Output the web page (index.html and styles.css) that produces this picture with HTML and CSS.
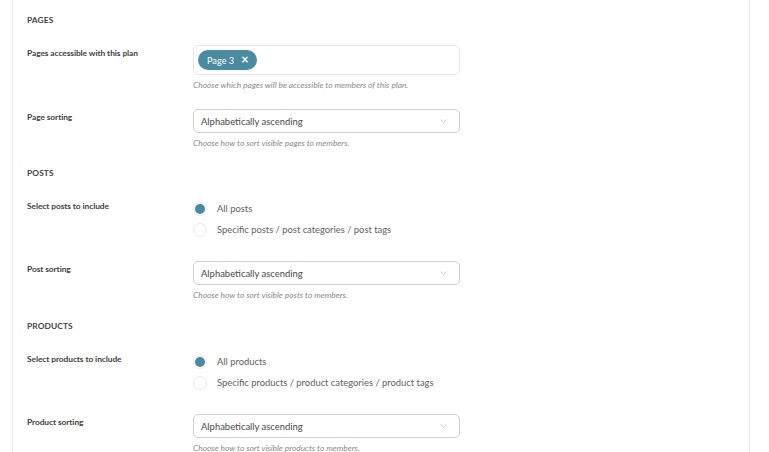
FILE: index.html
```html
<!DOCTYPE html>
<html lang="en">
<head>
<meta charset="utf-8">
<title>Plan content settings</title>
<link rel="stylesheet" href="styles.css">
</head>
<body>
<div class="card">
  <section class="section section-pages">
    <h3 class="section-title">PAGES</h3>
    <div class="row">
      <div class="label">Pages accessible with this plan</div>
      <div class="field">
        <div class="multi">
          <span class="chip">Page 3 <span class="chip-x">×</span></span>
        </div>
        <p class="help">Choose which pages will be accessible to members of this plan.</p>
      </div>
    </div>
    <div class="row">
      <div class="label">Page sorting</div>
      <div class="field">
        <div class="select">Alphabetically ascending
          <svg class="chev" width="9" height="6" viewBox="0 0 9 6"><path d="M1.5 1.5 L4.5 4.3 L7.5 1.5" fill="none" stroke="#cdcdcd" stroke-width="1"/></svg>
        </div>
        <p class="help">Choose how to sort visible pages to members.</p>
      </div>
    </div>
  </section>

  <section class="section section-posts">
    <h3 class="section-title">POSTS</h3>
    <div class="row row-radio">
      <div class="label">Select posts to include</div>
      <div class="field">
        <div class="radio"><span class="dot checked"></span>All posts</div>
        <div class="radio"><span class="dot"></span>Specific posts / post categories / post tags</div>
      </div>
    </div>
    <div class="row">
      <div class="label">Post sorting</div>
      <div class="field">
        <div class="select">Alphabetically ascending
          <svg class="chev" width="9" height="6" viewBox="0 0 9 6"><path d="M1.5 1.5 L4.5 4.3 L7.5 1.5" fill="none" stroke="#cdcdcd" stroke-width="1"/></svg>
        </div>
        <p class="help">Choose how to sort visible posts to members.</p>
      </div>
    </div>
  </section>

  <section class="section">
    <h3 class="section-title">PRODUCTS</h3>
    <div class="row row-radio">
      <div class="label">Select products to include</div>
      <div class="field">
        <div class="radio"><span class="dot checked"></span>All products</div>
        <div class="radio"><span class="dot"></span>Specific products / product categories / product tags</div>
      </div>
    </div>
    <div class="row">
      <div class="label">Product sorting</div>
      <div class="field">
        <div class="select">Alphabetically ascending
          <svg class="chev" width="9" height="6" viewBox="0 0 9 6"><path d="M1.5 1.5 L4.5 4.3 L7.5 1.5" fill="none" stroke="#cdcdcd" stroke-width="1"/></svg>
        </div>
        <p class="help">Choose how to sort visible products to members.</p>
      </div>
    </div>
  </section>
</div>
</body>
</html>
```

FILE: styles.css
```css
html, body {
  margin: 0;
  padding: 0;
  background: #ffffff;
}
body {
  font-family: Lato, "Liberation Sans", sans-serif;
  color: #3c3c3c;
  height: 452px;
  overflow: hidden;
}
.card {
  margin-left: 12px;
  width: 722px;
  border-left: 1px solid #ededed;
  border-right: 1px solid #ededed;
  padding: 13px 0 0 14px;
  height: 439px;
  overflow: hidden;
}
.section-title {
  margin: 0 0 18px;
  font-size: 8.4px;
  line-height: 14px;
  font-weight: 700;
  color: #3d434a;
  letter-spacing: 0.1px;
}
.row {
  display: grid;
  grid-template-columns: 166px 267px;
  margin-bottom: 18px;
}
.section-pages .row {
  margin-bottom: 17px;
}
.section .row:last-child {
  margin-bottom: 16px;
}
.section-posts .row:last-child {
  margin-bottom: 17px;
}
.section .row.row-radio {
  margin-bottom: 21px;
}
.label {
  font-size: 8.4px;
  font-weight: 700;
  line-height: 14px;
  padding-top: 1px;
  color: #3e3e3e;
  letter-spacing: -0.08px;
}
.field {
  display: flex;
  flex-direction: column;
}
.multi {
  height: 30px;
  box-sizing: border-box;
  border: 1px solid #e6e6e6;
  border-radius: 5px;
  padding: 4px;
  display: flex;
  align-items: flex-start;
}
.chip {
  display: inline-flex;
  align-items: center;
  height: 20px;
  padding: 0 9px 0 9px;
  border-radius: 10px;
  background: #4b8ba1;
  color: #ffffff;
  font-size: 9.2px;
}
.chip-x {
  margin-left: 7px;
  font-weight: 700;
  font-size: 12.5px;
  line-height: 1;
}
.help {
  margin: 3px 0 0;
  font-size: 8.35px;
  line-height: 14px;
  font-style: italic;
  color: #8a8a8a;
}
.select {
  height: 24px;
  box-sizing: border-box;
  border: 1px solid #cfcfcf;
  border-radius: 5px;
  padding: 0 7px;
  display: flex;
  align-items: center;
  font-size: 9.45px;
  color: #4a4a4a;
}
.chev {
  margin-left: auto;
  margin-right: 4px;
}
.radio {
  display: flex;
  align-items: center;
  height: 21px;
  font-size: 9.4px;
  color: #5f5f5f;
}
.dot {
  width: 14px;
  height: 14px;
  box-sizing: border-box;
  border: 1px solid #e8e8e8;
  border-radius: 50%;
  margin-right: 10px;
  flex: none;
  background: #fff;
}
.dot.checked {
  border: 1.5px solid #e9eef0;
  background: #4a88a0;
  background-clip: content-box;
  padding: 1px;
}
```
